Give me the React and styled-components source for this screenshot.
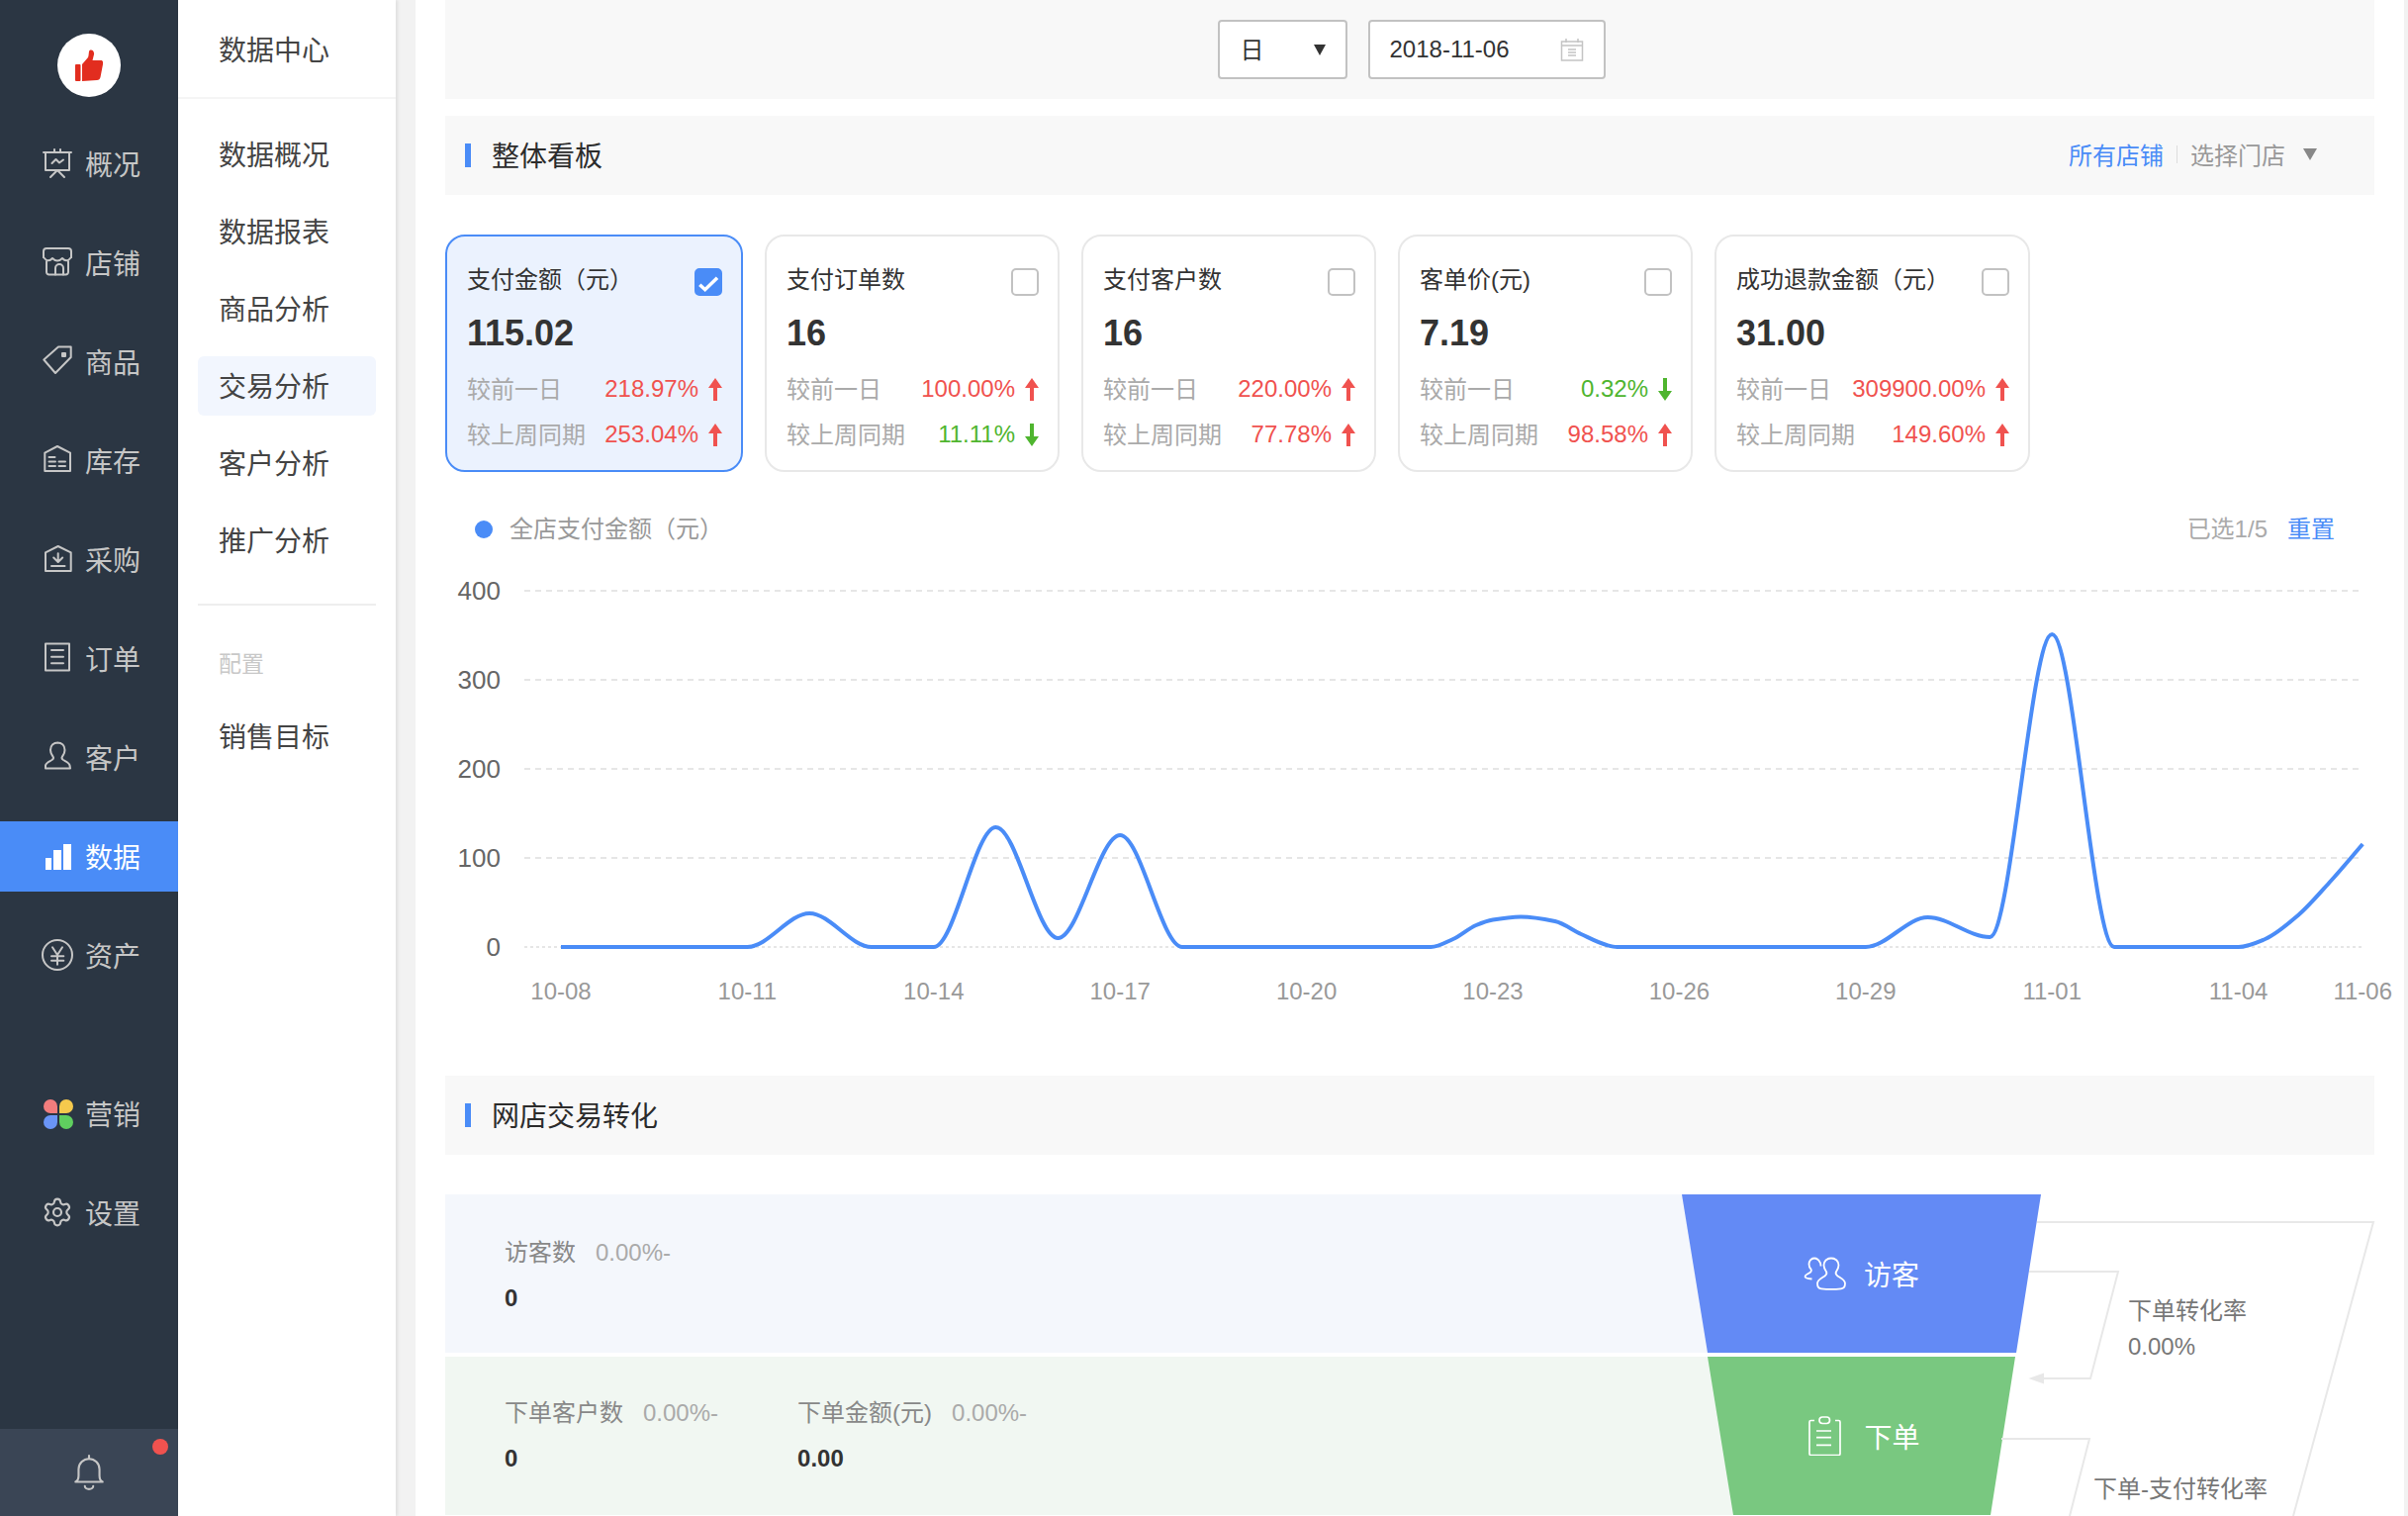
import React from "react";
import styled, { createGlobalStyle } from "styled-components";
import { Settings } from "lucide-react";

const BLUE = "#4a8cf7";
const RED = "#f0524f";
const GREEN = "#4fb52f";

const GlobalStyle = createGlobalStyle`
  html, body {
    margin: 0;
    padding: 0;
    height: 100%;
    overflow: hidden;
    background: #f2f2f2;
    font-family: "Liberation Sans", "Noto Sans CJK SC", sans-serif;
    color: #333;
  }
  * {
    box-sizing: border-box;
  }
`;

const Page = styled.div`
  display: flex;
  width: 2434px;
  height: 1532px;
  overflow: hidden;
`;

/* main dark nav */
const Sidebar = styled.nav`
  width: 180px;
  flex: none;
  display: flex;
  flex-direction: column;
  background: #2b3643;
`;

const LogoCircle = styled.div`
  width: 64px;
  height: 64px;
  margin: 34px auto 32px;
  border-radius: 50%;
  background: #fff;
  display: flex;
  align-items: center;
  justify-content: center;
`;

const NavGroup = styled.div`
  display: flex;
  flex-direction: column;
  gap: 29px;
  margin-top: ${props => props.$top || 0}px;
`;

const NavItem = styled.div`
  height: 71px;
  padding: 0 0 2px 42px;
  display: flex;
  align-items: center;
  gap: 12px;
  font-size: 28px;
  color: ${props => (props.$active ? "#fff" : "#c6c6c6")};
  background: ${props => (props.$active ? BLUE : "transparent")};
`;

const IconBox = styled.svg`
  width: 32px;
  height: 32px;
  flex: none;
  fill: none;
  stroke: currentColor;
  stroke-width: 2;
  stroke-linejoin: round;
  stroke-linecap: round;
`;

const BellIcon = styled(IconBox)`
  width: 34px;
  height: 38px;
`;

const BellBar = styled.div`
  margin-top: auto;
  height: 88px;
  background: #3a4555;
  color: #c6c6c6;
  display: flex;
  align-items: center;
  justify-content: center;
  position: relative;
`;

const BellDot = styled.span`
  position: absolute;
  top: 10px;
  right: 10px;
  width: 16px;
  height: 16px;
  border-radius: 50%;
  background: ${RED};
`;

/* secondary nav */
const SubNav = styled.aside`
  width: 220px;
  flex: none;
  background: #fff;
  box-shadow: 2px 0 3px rgba(0, 0, 0, 0.08);
  position: relative;
`;

const SubTitle = styled.div`
  height: 100px;
  padding-left: 41px;
  border-bottom: 2px solid #f5f5f5;
  display: flex;
  align-items: center;
  font-size: 28px;
  color: #444;
`;

const SubList = styled.div`
  padding: 26px 20px 0;
  display: flex;
  flex-direction: column;
  gap: 18px;
`;

const SubItem = styled.div`
  height: 60px;
  padding: 0 0 3px 21px;
  display: flex;
  align-items: center;
  font-size: 28px;
  color: #444;
  border-radius: 6px;
  background: ${props => (props.$active ? "#f2f6fe" : "transparent")};
`;

const SubDivider = styled.div`
  height: 2px;
  margin: 34px 20px 0;
  background: #eee;
`;

const SubLabel = styled.div`
  height: 60px;
  margin: 28px 0 14px;
  padding: 0 0 3px 41px;
  display: flex;
  align-items: center;
  font-size: 23px;
  color: #c8c8c8;
`;

const SubSingle = styled(SubItem)`
  margin: 0 20px;
`;

/* content */
const Main = styled.main`
  margin-left: 20px;
  width: 2010px;
  flex: none;
  padding: 0 30px;
  background: #fff;
  overflow: hidden;
`;

const TopBar = styled.div`
  height: 100px;
  padding-left: 3px;
  background: #f8f8f8;
  display: flex;
  align-items: center;
  justify-content: center;
  gap: 21px;
`;

const Field = styled.div`
  width: ${props => props.$width}px;
  height: 60px;
  padding: 0 20px 0 ${props => props.$left}px;
  display: flex;
  align-items: center;
  justify-content: space-between;
  background: #fff;
  border: 2px solid #c2c2c2;
  border-radius: 4px;
  font-size: 24px;
  color: #333;
`;

const FieldText = styled.span`
  padding-bottom: 3px;
`;

const Caret = styled.span`
  width: 0;
  height: 0;
  border-left: ${props => props.$size}px solid transparent;
  border-right: ${props => props.$size}px solid transparent;
  border-top: ${props => props.$size + 5}px solid ${props => props.$color};
`;

const SectionBar = styled.div`
  height: 80px;
  margin-top: ${props => props.$top}px;
  padding: 0 58px 0 20px;
  background: #f8f8f8;
  display: flex;
  align-items: center;
`;

const SectionMark = styled.span`
  width: 6px;
  height: 24px;
  margin-right: 21px;
  background: ${BLUE};
`;

const SectionTitle = styled.h2`
  margin: 0;
  padding-bottom: 3px;
  font-size: 28px;
  font-weight: 400;
  color: #2c2c2c;
`;

const StorePicker = styled.div`
  margin-left: auto;
  padding-bottom: 3px;
  display: flex;
  align-items: center;
  font-size: 24px;
  color: #999;
`;

const StoreLink = styled.span`
  color: ${BLUE};
`;

const StoreSep = styled.span`
  width: 1px;
  height: 18px;
  margin: 0 13px;
  background: #ddd;
`;

const StoreCaret = styled.span`
  margin-left: 18px;
  display: flex;
`;

const CardRow = styled.div`
  margin-top: 40px;
  display: flex;
  gap: 22px;
`;

const Card = styled.div`
  width: ${props => props.$width}px;
  height: 240px;
  padding: 33px 19px 0 20px;
  border: 2px solid ${props => (props.$active ? BLUE : "#e8e8e8")};
  border-radius: 20px;
  background: ${props => (props.$active ? "#ebf2fe" : "#fff")};
`;

const CardHead = styled.div`
  height: 28px;
  display: flex;
  align-items: flex-start;
  justify-content: space-between;
`;

const CardTitle = styled.div`
  font-size: 24px;
  line-height: 22px;
  color: #333;
`;

const Check = styled.span`
  width: 28px;
  height: 28px;
  margin-top: -1px;
  display: flex;
  align-items: center;
  justify-content: center;
  border-radius: 5px;
  border: 2px solid ${props => (props.$on ? BLUE : "#c2c2c2")};
  background: ${props => (props.$on ? BLUE : "#fff")};
`;

const CardValue = styled.div`
  margin-top: 17px;
  font-size: 36px;
  line-height: 40px;
  font-weight: 700;
  color: #333;
`;

const StatRows = styled.div`
  margin-top: 21px;
  display: flex;
  flex-direction: column;
  gap: 16px;
`;

const StatRow = styled.div`
  height: 30px;
  display: flex;
  align-items: center;
  font-size: 24px;
  color: #aaa;
`;

const StatLabel = styled.span`
  padding-bottom: 3px;
`;

const StatValue = styled.span`
  margin-left: auto;
  margin-right: 10px;
  color: ${props => (props.$down ? GREEN : RED)};
`;

const LegendRow = styled.div`
  height: 34px;
  margin-top: 41px;
  padding: 0 40px 6px 30px;
  display: flex;
  align-items: center;
  font-size: 24px;
  color: #999;
`;

const LegendDot = styled.span`
  width: 18px;
  height: 18px;
  margin: 6px 17px 0 0;
  border-radius: 50%;
  background: ${BLUE};
`;

const LegendMeta = styled.span`
  margin-left: auto;
  color: #aaa;
`;

const LegendReset = styled.span`
  margin-left: 20px;
  color: ${BLUE};
`;

const ChartSvg = styled.svg`
  display: block;
  width: 1950px;
  height: 535px;
  overflow: visible;
  font-family: "Liberation Sans", sans-serif;
`;

const Funnel = styled.section`
  margin-top: 40px;
  position: relative;
  display: flex;
  flex-direction: column;
  gap: 4px;
`;

const FunnelRow = styled.div`
  display: flex;
  height: 160px;
`;

const Band = styled.div`
  width: ${props => props.$width}px;
  flex: none;
  padding: ${props => props.$top}px 0 0 60px;
  display: flex;
  gap: 80px;
  background: ${props => props.$bg};
`;

const Metric = styled.div`
  display: flex;
  flex-direction: column;
`;

const MetricHead = styled.div`
  display: flex;
  gap: 20px;
  font-size: 24px;
  line-height: 34px;
  color: #888;
`;

const MetricRate = styled.span`
  color: #aaa;
`;

const MetricValue = styled.div`
  margin-top: 12px;
  font-size: 24px;
  line-height: 34px;
  font-weight: 700;
  color: #333;
`;

const Stage = styled.div`
  width: ${props => props.$width}px;
  flex: none;
  margin-left: -26px;
  padding-left: ${props => props.$pad || 0}px;
  display: flex;
  align-items: center;
  justify-content: center;
  gap: ${props => props.$gap}px;
  font-size: 28px;
  color: #fff;
  background: ${props => props.$bg};
  clip-path: polygon(0 0, 100% 0, calc(100% - 25px) 100%, 26px 100%);
`;

const RateCell = styled.div`
  margin-left: ${props => props.$left}px;
  padding-top: ${props => props.$top}px;
  font-size: 24px;
  line-height: 36px;
  color: #777;
  position: relative;
  z-index: 1;
`;

const Connectors = styled.svg`
  position: absolute;
  left: 1570px;
  top: 0;
  width: 400px;
  height: 330px;
  fill: none;
  stroke: #e8e8e8;
  stroke-width: 2;
`;

const navTop = [
  ["概况", <><path d="M2 5h28M4 5v18h24V5M13 2v3M19 2v3" /><path d="M10.500 16l4-4 3.500 3.500 4-3" /><path d="M16 23l-7 7M16 23l7 7" /></>],
  ["店铺", <><path d="M2 11V5a3 3 0 0 1 3-3h22a3 3 0 0 1 3 3v6" /><path d="M2 11q4.500 6 9 1 5 5 10 0 4.500 5 9-1" /><path d="M5 15v11a2.500 2.500 0 0 0 2.500 2.500h17a2.500 2.500 0 0 0 2.500-2.500V15" /><path d="M14 28.500V22a4 4 0 0 1 8 0v6.500" /></>],
  ["商品", <><path d="M2.300 14.500L17 1.500h12.700V12L14 28z" /><path d="M21 8h3v3h-3z" fill="currentColor" /></>],
  ["库存", <><path d="M3.300 8.600L16 2l13 6.600V27H3.300z" /><path d="M7.500 13h6M7.500 17.500h6.500M17.500 17.500h6.500M7.500 22h6.500M17.500 22h6.500" /></>],
  ["采购", <><path d="M4 9.300L16.700 3l13 6.300V28H4z" /><path d="M16.700 10.300v8.300M12.200 14.500l4.500 4.500 4.500-4.500M10 23h13.500" /></>],
  ["订单", <><path d="M4 1.500h24v27H4z" /><path d="M10 8h12M10 14.700h12M10 21.300h12" /></>],
  ["客户", <path d="M16.500 1.500c-4.500 0-7.500 3-7.500 7.500 0 3 1.500 5 2.500 6.500.8 1.200.5 2.500-1 3.500-2 1.200-6 2.500-6.500 5.500L4 27.500h25l-.5-3c-.5-3-4.500-4.300-6.500-5.500-1.500-1-1.800-2.300-1-3.500 1-1.500 2.500-3.500 2.500-6.500 0-4.500-3-7.500-7.500-7.500z" />],
];

const subItems = ["数据概况", "数据报表", "商品分析", "交易分析", "客户分析", "推广分析"];

const cards = [
  { title: "支付金额（元）", value: "115.02", width: 301, active: true, day: ["218.97%", false], week: ["253.04%", false] },
  { title: "支付订单数", value: "16", width: 298, day: ["100.00%", false], week: ["11.11%", true] },
  { title: "支付客户数", value: "16", width: 298, day: ["220.00%", false], week: ["77.78%", false] },
  { title: "客单价(元)", value: "7.19", width: 298, day: ["0.32%", true], week: ["98.58%", false] },
  { title: "成功退款金额（元）", value: "31.00", width: 319, day: ["309900.00%", false], week: ["149.60%", false] },
];

const yTicks = [
  ["400", 45],
  ["300", 135],
  ["200", 225],
  ["100", 315],
  ["0", 405],
];

const xTicks = [
  ["10-08", 0], ["10-11", 3], ["10-14", 6], ["10-17", 9], ["10-20", 12], ["10-23", 15],
  ["10-26", 18], ["10-29", 21], ["11-01", 24], ["11-04", 27], ["11-06", 29],
];

// [day, height of the line above zero in px]
const series = [
  [0, 0], [3, 0], [4, 34], [5, 0], [6, 0], [7, 121], [8, 9], [9, 113], [10, 0], [14, 0],
  [14.36, 8], [14.73, 22], [15, 27.5], [15.45, 30.5], [16, 26], [16.42, 13], [16.83, 2], [17, 0],
  [21, 0], [22, 30], [23, 10], [24, 316], [25, 0], [27, 0],
  [27.43, 8], [27.96, 32], [28.49, 67], [29, 104],
];

const dayX = day => 117 + 62.8 * day;

// monotone cubic through the points, same look as the chart lib's smooth line
function linePath(data) {
  const pts = data.map(([d, h]) => [dayX(d), 405 - h]);
  const n = pts.length;
  const slope = [];
  for (let i = 0; i < n - 1; i++) {
    slope.push((pts[i + 1][1] - pts[i][1]) / (pts[i + 1][0] - pts[i][0]));
  }
  const tan = pts.map((_, i) => {
    if (i === 0) return slope[0];
    if (i === n - 1) return slope[n - 2];
    if (slope[i - 1] * slope[i] <= 0) return 0;
    return (2 * slope[i - 1] * slope[i]) / (slope[i - 1] + slope[i]);
  });
  let d = `M${pts[0][0]} ${pts[0][1]}`;
  for (let i = 0; i < n - 1; i++) {
    const dx = (pts[i + 1][0] - pts[i][0]) / 3;
    d += `C${pts[i][0] + dx} ${pts[i][1] + tan[i] * dx} ${pts[i + 1][0] - dx} ${pts[i + 1][1] - tan[i + 1] * dx} ${pts[i + 1][0]} ${pts[i + 1][1]}`;
  }
  return d;
}

const Arrow = ({ down }) => (
  <svg width="14" height="23" viewBox="0 0 14 23" style={{ flex: "none", transform: down ? "rotate(180deg)" : "none" }}>
    <path d="M7 0L14 10H9V23H5V10H0z" fill={down ? GREEN : RED} />
  </svg>
);

const Stat = ({ label, value, down }) => (
  <StatRow>
    <StatLabel>{label}</StatLabel>
    <StatValue $down={down}>{value}</StatValue>
    <Arrow down={down} />
  </StatRow>
);

const MetricBlock = ({ name, rate, value }) => (
  <Metric>
    <MetricHead>
      <span>{name}</span>
      <MetricRate>{rate}</MetricRate>
    </MetricHead>
    <MetricValue>{value}</MetricValue>
  </Metric>
);

export default function App() {
  return (
    <Page>
      <GlobalStyle />
      <Sidebar>
        <LogoCircle>
          <svg width="28" height="32" viewBox="0 0 28 32">
            <rect x="0" y="15" width="5.500" height="17" rx="1" fill="#e22d1f" />
            <path d="M7 15l6-7c1-2 .5-6 1.500-7 2.500-1.500 5 1 4.500 4l-1.500 6H26c2 0 2.500 2 2 4l-2.500 13c-.5 2-1.500 3-3.500 3L7 32z" fill="#e22d1f" />
          </svg>
        </LogoCircle>
        <NavGroup>
          {navTop.map(([label, icon]) => (
            <NavItem key={label}>
              <IconBox viewBox="0 0 32 32">{icon}</IconBox>
              {label}
            </NavItem>
          ))}
          <NavItem $active>
            <IconBox viewBox="0 0 32 32">
              <path d="M4 18h6v12H4zM12 10h8v20h-8zM22 4h8v26h-8z" fill="#fff" stroke="none" />
            </IconBox>
            数据
          </NavItem>
          <NavItem>
            <IconBox viewBox="0 0 32 32">
              <circle cx="16" cy="16" r="15" />
              <path d="M11 8.300l5 7.700 5-7.700M16 16v9.700M10 17.300h12.300M10 21.700h12.300" />
            </IconBox>
            资产
          </NavItem>
        </NavGroup>
        <NavGroup $top={89}>
          <NavItem>
            <IconBox viewBox="0 0 32 32">
              <path d="M16 16H9a7 7 0 1 1 7-7z" fill="#f27d7d" stroke="none" />
              <path d="M18 16h7a7 7 0 1 0-7-7z" fill="#f5c94d" stroke="none" />
              <path d="M16 18H9a7 7 0 1 0 7 7z" fill="#6a95f7" stroke="none" />
              <path d="M18 18h7a7 7 0 1 1-7 7z" fill="#5fcf5f" stroke="none" />
            </IconBox>
            营销
          </NavItem>
          <NavItem>
            <Settings size={32} strokeWidth={1.6} />
            设置
          </NavItem>
        </NavGroup>
        <BellBar>
          <BellIcon viewBox="0 0 32 36">
            <path d="M3 27c2-1 3-3 3-6v-6a10 10 0 0 1 20 0v6c0 3 1 5 3 6z" />
            <path d="M16 2v3M12 31a4 3 0 0 0 8 0" />
          </BellIcon>
          <BellDot />
        </BellBar>
      </Sidebar>

      <SubNav>
        <SubTitle>数据中心</SubTitle>
        <SubList>
          {subItems.map(item => (
            <SubItem key={item} $active={item === "交易分析"}>
              {item}
            </SubItem>
          ))}
        </SubList>
        <SubDivider />
        <SubLabel>配置</SubLabel>
        <SubSingle>销售目标</SubSingle>
      </SubNav>

      <Main>
        <TopBar>
          <Field $width={131} $left={21}>
            <FieldText>日</FieldText>
            <Caret $size={6} $color="#333" />
          </Field>
          <Field $width={240} $left={20}>
            2018-11-06
            <svg width="24" height="24" viewBox="0 0 24 24" fill="none" stroke="#c4c4c4" strokeWidth="1.500">
              <path d="M1.500 4h21v19h-21zM1.500 8h21M6 1v4M18 1v4M8 12h8M8 15h8M8 18h8" />
            </svg>
          </Field>
        </TopBar>

        <SectionBar $top={17}>
          <SectionMark />
          <SectionTitle>整体看板</SectionTitle>
          <StorePicker>
            <StoreLink>所有店铺</StoreLink>
            <StoreSep />
            选择门店
            <StoreCaret>
              <Caret $size={7} $color="#888" />
            </StoreCaret>
          </StorePicker>
        </SectionBar>

        <CardRow>
          {cards.map(card => (
            <Card key={card.title} $width={card.width} $active={card.active}>
              <CardHead>
                <CardTitle>{card.title}</CardTitle>
                <Check $on={card.active}>
                  {card.active && (
                    <svg width="24" height="24" viewBox="0 0 24 24" fill="none" stroke="#fff" strokeWidth="3.500" style={{ flex: "none" }}>
                      <path d="M3.300 14.700l5.400 5L21 7.700" />
                    </svg>
                  )}
                </Check>
              </CardHead>
              <CardValue>{card.value}</CardValue>
              <StatRows>
                <Stat label="较前一日" value={card.day[0]} down={card.day[1]} />
                <Stat label="较上周同期" value={card.week[0]} down={card.week[1]} />
              </StatRows>
            </Card>
          ))}
        </CardRow>

        <LegendRow>
          <LegendDot />
          全店支付金额（元）
          <LegendMeta>已选1/5</LegendMeta>
          <LegendReset>重置</LegendReset>
        </LegendRow>

        <ChartSvg viewBox="0 0 1950 535">
          {yTicks.map(([label, y]) => (
            <g key={label}>
              <line x1="80" x2="1938" y1={y} y2={y} stroke="#e6e6e6" strokeWidth="2" strokeDasharray={y === 405 ? "3 3" : "6 5"} />
              <text x="56" y={y + 9} textAnchor="end" fontSize="26" fill="#666">
                {label}
              </text>
            </g>
          ))}
          {xTicks.map(([label, day]) => (
            <text key={label} x={dayX(day)} y="458" textAnchor="middle" fontSize="24" fill="#999">
              {label}
            </text>
          ))}
          <path d={linePath(series)} fill="none" stroke={BLUE} strokeWidth="4" strokeLinejoin="round" />
        </ChartSvg>

        <SectionBar $top={0}>
          <SectionMark />
          <SectionTitle>网店交易转化</SectionTitle>
        </SectionBar>

        <Funnel>
          <FunnelRow>
            <Band $width={1276} $top={42} $bg="#f4f7fc">
              <MetricBlock name="访客数" rate="0.00%-" value="0" />
            </Band>
            <Stage $width={363} $gap={17} $bg="#638af5">
              <svg width="44" height="35" viewBox="0 0 44 35" fill="none" stroke="#fff" strokeWidth="1.800">
                <path d="M28 1.500c-4.500 0-7.500 3-7.500 7 0 3 1.500 5 2.500 6.500.8 1.500.5 3-1.500 4.500-3 2-7.500 3.500-7.500 7.500 0 3 1 5 4 5.300 6 .7 14 .7 20 0 3-.3 4-2.300 4-5.300 0-4-4.500-5.500-7.500-7.500-2-1.500-2.300-3-1.500-4.500 1-1.500 2.500-3.500 2.500-6.500 0-4-3-7-7.500-7z" />
                <path d="M17.500 9.500C17.500 4.500 14 1.500 11 1.500c-3.500 0-5.500 3-5.500 6 0 2.500 1 4 2 5 .8 1 .3 2.500-1 3.500-2 1.500-5 2.300-5 4 0 1.500 2 2 7 2.500" />
              </svg>
              访客
            </Stage>
            <RateCell $left={88} $top={100}>
              <div>下单转化率</div>
              <div>0.00%</div>
            </RateCell>
          </FunnelRow>
          <FunnelRow>
            <Band $width={1302} $top={40} $bg="#f1f7f2">
              <MetricBlock name="下单客户数" rate="0.00%-" value="0" />
              <MetricBlock name="下单金额(元)" rate="0.00%-" value="0.00" />
            </Band>
            <Stage $width={311} $gap={23} $pad={6} $bg="#79c880">
              <svg width="33" height="40" viewBox="0 0 33 40" fill="none" stroke="#fff" strokeWidth="1.700">
                <path d="M6 4.500H2.500A1.500 1.500 0 0 0 1 6v32a1.500 1.500 0 0 0 1.500 1.500h28a1.500 1.500 0 0 0 1.500-1.500V6a1.500 1.500 0 0 0-1.500-1.500H27" />
                <rect x="11" y="1" width="10.500" height="6.500" rx="3.200" />
                <path d="M8 15h15M8 21.700h15M8 29.300h15" />
              </svg>
              下单
            </Stage>
            <RateCell $left={79} $top={116}>
              下单-支付转化率
            </RateCell>
          </FunnelRow>
          <Connectors viewBox="0 0 400 330">
            <path d="M39 28h340l-81 297" />
            <path d="M31 78h90l-28 108H44" />
            <path d="M30.500 186L46 180.500v11z" fill="#e8e8e8" stroke="none" />
            <path d="M3 247h89l-20 78" />
          </Connectors>
        </Funnel>
      </Main>
    </Page>
  );
}
